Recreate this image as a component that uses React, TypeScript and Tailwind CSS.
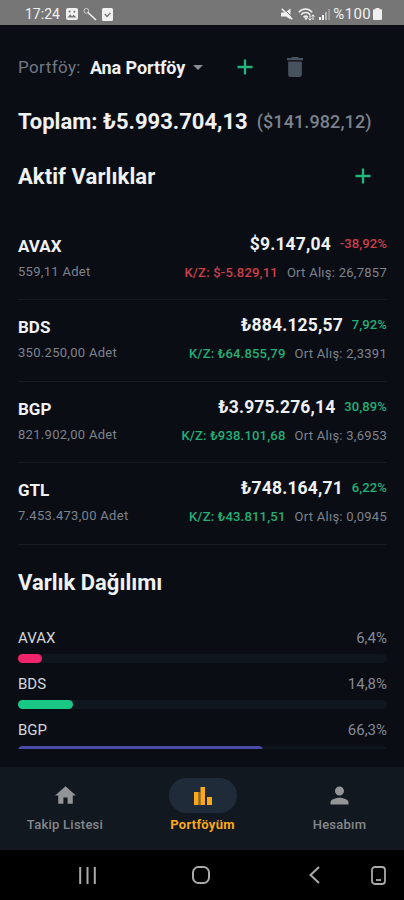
import React from "react";

type Asset = {
  symbol: string;
  amount: string;
  value: string;
  change: string;
  profit: string;
  average: string;
  isLoss?: boolean;
};

const assets: Asset[] = [
  { symbol: "AVAX", amount: "559,11", value: "$9.147,04", change: "-38,92%", profit: "$-5.829,11", average: "26,7857", isLoss: true },
  { symbol: "BDS", amount: "350.250,00", value: "₺884.125,57", change: "7,92%", profit: "₺64.855,79", average: "2,3391" },
  { symbol: "BGP", amount: "821.902,00", value: "₺3.975.276,14", change: "30,89%", profit: "₺938.101,68", average: "3,6953" },
  { symbol: "GTL", amount: "7.453.473,00", value: "₺748.164,71", change: "6,22%", profit: "₺43.811,51", average: "0,0945" },
];

const distribution = [
  { symbol: "AVAX", label: "6,4%", percent: 6.5, color: "bg-[#f0246a]" },
  { symbol: "BDS", label: "14,8%", percent: 14.8, color: "bg-[#1ac886]" },
  { symbol: "BGP", label: "66,3%", percent: 66.3, color: "bg-[#4a4bab]" },
];

function StatusBar() {
  return (
    <div className="flex h-[25px] shrink-0 items-center justify-between bg-[#767676] pt-[3px] pr-[22px] pl-[25px] text-[#f0f0f0]">
      <div className="flex items-center gap-[5px]">
        <span className="w-[36px] text-[14px] leading-none whitespace-nowrap">17:24</span>
        <svg width="12" height="12" viewBox="0 0 12 12">
          <rect width="12" height="12" rx="2" fill="currentColor" />
          <path d="M1.5 9.5l2.7-3.3 1.8 2 1.6-1.4 2.9 2.7z" fill="#767676" />
          <circle cx="3.6" cy="3.6" r="1" fill="#767676" />
          <circle cx="8.4" cy="3.8" r="1" fill="#767676" />
        </svg>
        <svg width="14" height="14" viewBox="0 0 14 14" fill="none" stroke="currentColor">
          <circle cx="3.3" cy="3.8" r="2.4" strokeWidth="1" opacity="0.7" />
          <path d="M5 5.5l8 7.5" strokeWidth="1.6" />
        </svg>
        <svg width="11" height="13" viewBox="0 0 11 13">
          <rect width="11" height="13" rx="1.5" fill="currentColor" />
          <path d="M2.8 6l2.2 2.4 3.4-3.4" fill="none" stroke="#767676" strokeWidth="1.4" />
        </svg>
      </div>
      <div className="flex items-center">
        <svg width="12" height="12" viewBox="0 0 12 12" className="mr-[5px]">
          <path d="M0 4.500h4L9.500 .500v11L5 8.500H0z" fill="currentColor" />
          <path d="M2 0l10 10" stroke="#767676" strokeWidth="1" />
          <path d="M.800 .800l10.500 10.500" stroke="currentColor" strokeWidth="1.500" />
        </svg>
        <svg width="18" height="13" viewBox="0 0 18 13" className="mr-[3px]" fill="none" stroke="currentColor">
          <path d="M.8 4.2c4-4.2 9.400-4.200 13.400 0M3 6.800c2.800-3 6.500-3 9.300 0M5.500 9.200c1.500-1.500 3-1.500 4.500 0" strokeWidth="1.500" />
          <path d="M6.500 9.500h3L8 12z" fill="currentColor" strokeWidth="0.500" />
          <path d="M12 7v5M10.500 10.500l1.500 1.700 1.500-1.700M15 12V7M13.500 8.500L15 6.800l1.500 1.700" strokeWidth="1" />
        </svg>
        <svg width="12" height="11" viewBox="0 0 12 11" className="mr-[2px]" fill="currentColor">
          <rect x="0" y="8" width="2" height="3" />
          <rect x="3" y="6" width="2" height="5" />
          <rect x="6" y="3" width="2" height="8" opacity="0.500" />
          <rect x="9" y="0" width="2" height="11" opacity="0.300" />
        </svg>
        <span className="text-[15px] leading-none tracking-[0.350px]">%100</span>
        <svg width="9" height="12" viewBox="0 0 9 12" className="ml-[2px]" fill="currentColor">
          <path d="M2.500 0h4v1.300H8a1 1 0 0 1 1 1V11a1 1 0 0 1-1 1H1a1 1 0 0 1-1-1V2.300a1 1 0 0 1 1-1h1.500z" />
        </svg>
      </div>
    </div>
  );
}

function PlusIcon() {
  return (
    <svg width="16" height="16" viewBox="0 0 16 16" fill="none" stroke="#23b57c" strokeWidth="2.300">
      <path d="M8 .5v15M.5 8h15" />
    </svg>
  );
}

function AssetRow({ asset }: { asset: Asset }) {
  const color = asset.isLoss ? "text-[#cf3e49]" : "text-[#22b077]";

  return (
    <div className="flex h-[81.400px] justify-between border-b border-[#161b22]">
      <div className="pt-[16px]">
        <p className="text-[17px] leading-[22px] font-bold text-[#f0f1f3]">{asset.symbol}</p>
        <p className="mt-[6px] text-[13px] leading-[18px] tracking-[0.300px] text-[#7d838d]">{asset.amount} Adet</p>
      </div>
      <div className="flex flex-col items-end pt-[14px]">
        <div className="flex items-center gap-[9px]">
          <span className="text-[17.500px] leading-[22px] font-bold tracking-[0.150px] text-[#f0f1f3]">{asset.value}</span>
          <span className={`text-[13px] leading-[22px] font-medium tracking-[0.100px] ${color}`}>{asset.change}</span>
        </div>
        <div className="mt-[9px] flex gap-[9px] text-[13px] leading-[18px] tracking-[0.270px]">
          <span className={`font-medium tracking-[0.200px] ${color}`}>K/Z: {asset.profit}</span>
          <span className="text-[#7d838d]">Ort Alış: {asset.average}</span>
        </div>
      </div>
    </div>
  );
}

function TabBar() {
  return (
    <nav className="flex h-[83px] shrink-0 bg-[#111820] text-[13px] font-medium tracking-[0.250px] text-[#85878a]">
      <div className="flex w-[130px] flex-col items-center pt-[11px]">
        <div className="flex h-[35px] items-center">
          <svg width="25" height="25" viewBox="0 0 24 24" fill="#939496">
            <path d="M10 20v-6h4v6h5v-8h3L12 3 2 12h3v8z" />
          </svg>
        </div>
        <span className="mt-[3px] leading-[18px]">Takip Listesi</span>
      </div>
      <div className="flex w-[145px] flex-col items-center pt-[11px] text-[#fba81b]">
        <div className="flex h-[35px] w-[68px] items-center justify-center rounded-full bg-[#1f2b39]">
          <svg width="18" height="18" viewBox="0 0 18 18" fill="currentColor">
            <rect x="0" y="5" width="4.500" height="13" />
            <rect x="4.500" y="5" width="2" height="13" opacity="0.500" />
            <rect x="6.500" y="0" width="4.500" height="18" />
            <rect x="13" y="10" width="5" height="8" />
          </svg>
        </div>
        <span className="mt-[3px] leading-[18px] font-bold">Portföyüm</span>
      </div>
      <div className="flex w-[129px] flex-col items-center pt-[11px]">
        <div className="flex h-[35px] items-center">
          <svg width="27" height="27" viewBox="0 0 24 24" fill="#939496">
            <path d="M12 12c2.210 0 4-1.790 4-4s-1.790-4-4-4-4 1.790-4 4 1.790 4 4 4zm0 2c-2.670 0-8 1.340-8 4v2h16v-2c0-2.660-5.330-4-8-4z" />
          </svg>
        </div>
        <span className="mt-[3px] leading-[18px]">Hesabım</span>
      </div>
    </nav>
  );
}

function SystemBar() {
  return (
    <div className="flex h-[50px] shrink-0 items-center bg-black pl-[79px] text-[#aaaaaa]">
      <svg width="17" height="17" viewBox="0 0 17 17" fill="none" stroke="currentColor" strokeWidth="2">
        <path d="M1.200 0v17M8.500 0v17M15.800 0v17" />
      </svg>
      <svg width="18" height="18" viewBox="0 0 18 18" className="ml-[96px]" fill="none" stroke="currentColor" strokeWidth="2">
        <rect x="1" y="1" width="16" height="16" rx="5.500" />
      </svg>
      <svg width="11" height="18" viewBox="0 0 11 18" className="ml-[99px]" fill="none" stroke="currentColor" strokeWidth="2">
        <path d="M10 1L1.500 9 10 17" />
      </svg>
      <svg width="15" height="19" viewBox="0 0 15 19" className="ml-[51px]" fill="none" stroke="currentColor" strokeWidth="1.800">
        <rect x="1" y="1" width="13" height="17" rx="3" />
        <path d="M5 14h5" />
      </svg>
    </div>
  );
}

export default function App() {
  return (
    <div className="flex h-[900px] w-[404px] flex-col overflow-hidden bg-[#0a0d14] font-[Roboto,sans-serif] text-[#f0f1f3]">
      <StatusBar />

      <main className="h-[742px] shrink-0 pr-[17px] pl-[18px]">
        <div className="flex h-[84px] items-center">
          <span className="pt-px text-[17px] tracking-[0.400px] text-[#727883]">Portföy:</span>
          <span className="ml-[9px] text-[18px] font-bold tracking-[-0.100px]">Ana Portföy</span>
          <svg width="10" height="5" viewBox="0 0 10 5" className="ml-[8px]" fill="#8a8f96">
            <path d="M0 0h10L5 5z" />
          </svg>
          <div className="ml-[34px]">
            <PlusIcon />
          </div>
          <svg width="16" height="20" viewBox="5 3 14 18" preserveAspectRatio="none" className="ml-[34px]" fill="#48515e">
            <path d="M6 19c0 1.100.900 2 2 2h8c1.100 0 2-.900 2-2V7H6v12zM19 4h-3.500l-1-1h-5l-1 1H5v2h14V4z" />
          </svg>
        </div>

        <div className="-mt-px flex h-[26px] items-center">
          <span className="text-[22px] font-bold">Toplam: ₺5.993.704,13</span>
          <span className="ml-[9px] text-[18px] font-medium tracking-[0.100px] text-[#7c828d]">($141.982,12)</span>
        </div>

        <div className="mt-[28px] flex h-[28px] items-center justify-between pr-[16px]">
          <h2 className="text-[22px] font-bold tracking-[0.080px]">Aktif Varlıklar</h2>
          <PlusIcon />
        </div>

        <div className="mt-[29px]">
          {assets.map((asset) => (
            <AssetRow key={asset.symbol} asset={asset} />
          ))}
        </div>

        <h2 className="mt-[24px] text-[22px] leading-[28px] font-bold">Varlık Dağılımı</h2>

        {/* the last row is cut off by the scroll area */}
        <div className="mt-[31px] h-[121px] overflow-hidden">
          {distribution.map((item) => (
            <div key={item.symbol} className="mb-[9px] h-[37.200px]">
              <div className="flex justify-between text-[15px] leading-[20px]">
                <span className="text-[#d4d6d9]">{item.symbol}</span>
                <span className="text-[#858a92]">{item.label}</span>
              </div>
              <div className="mt-[6px] h-[9px] rounded-full bg-[#10161e]">
                <div
                  className={`h-full rounded-full ${item.color}`}
                  style={{ width: `${item.percent}%` }}
                />
              </div>
            </div>
          ))}
        </div>
      </main>

      <TabBar />
      <SystemBar />
    </div>
  );
}
